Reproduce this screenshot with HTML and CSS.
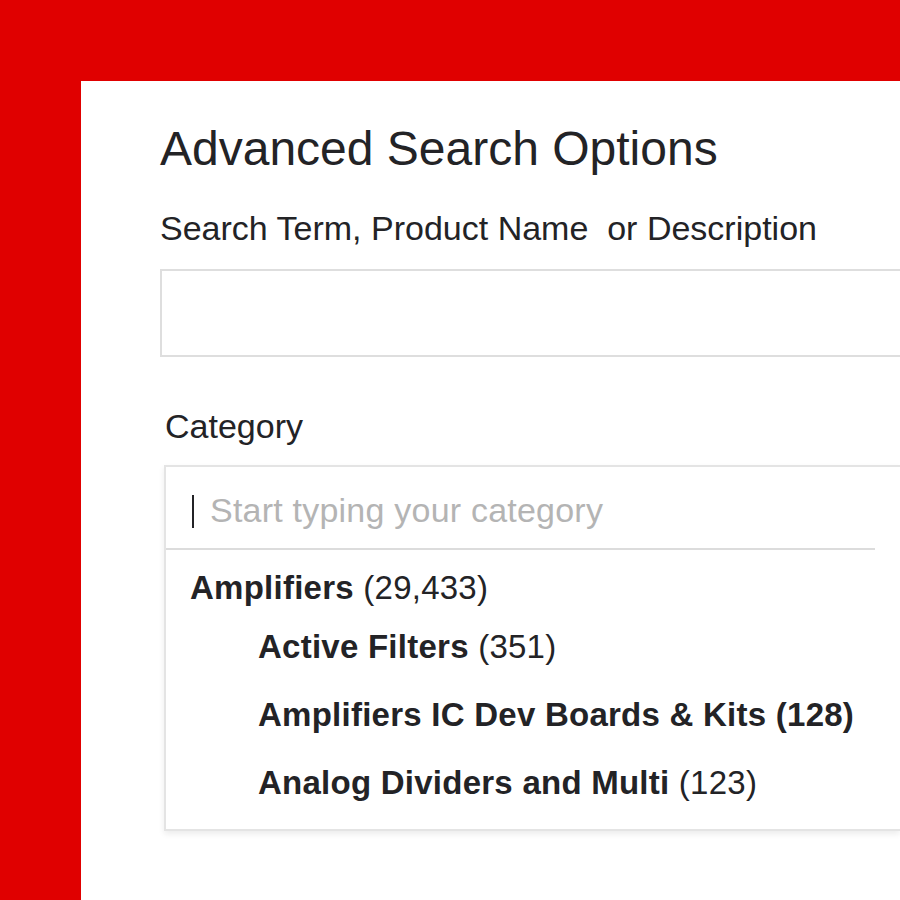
FILE: index.html
```html
<!DOCTYPE html>
<html>
<head>
<meta charset="utf-8">
<link rel="stylesheet" href="styles.css">
</head>
<body>
<div class="panel">
  <h1 class="title">Advanced Search Options</h1>
  <div class="label">Search Term, Product Name&nbsp; or Description</div>
  <div class="input"></div>
  <div class="label cat-label">Category</div>
  <div class="catbox">
    <div class="cat-search"><span class="caret"></span><span class="placeholder">Start typing your category</span></div>
    <div class="sep"></div>
    <ul class="list">
      <li class="item top"><b>Amplifiers</b> (29,433)</li>
      <li class="item sub first"><b>Active Filters</b> (351)</li>
      <li class="item sub"><b>Amplifiers IC Dev Boards &amp; Kits (128)</b></li>
      <li class="item sub"><b>Analog Dividers and Multi</b> (123)</li>
    </ul>
  </div>
</div>
</body>
</html>
```
FILE: styles.css
```css
html, body { margin: 0; padding: 0; }
body {
  background: #e00000;
  width: 900px;
  height: 900px;
  overflow: hidden;
  font-family: "Liberation Sans", Arial, sans-serif;
  color: #232326;
}
.panel {
  margin: 81px 0 0 81px;
  height: 819px;
  background: #fff;
  padding: 40px 0 0 79px;
  box-sizing: border-box;
  overflow: hidden;
}
.title {
  margin: 0;
  font-weight: normal;
  font-size: 48px;
  line-height: 56px;
}
.label {
  font-size: 34px;
  line-height: 40px;
  margin-top: 31px;
}
.input {
  margin-top: 21px;
  height: 84px;
  border: 2px solid #dedede;
  border-right: none;
}
.cat-label { margin-left: 5px; margin-top: 49px; }
.catbox {
  margin-top: 19px;
  margin-left: 4px;
  border: 2px solid #e4e4e4;
  border-right: none;
  box-shadow: 0 3px 6px rgba(0,0,0,0.08);
  height: 366px;
  box-sizing: border-box;
}
.cat-search {
  padding: 23px 0 18px 26px;
  font-size: 34px;
  line-height: 40px;
}
.caret {
  display: inline-block;
  width: 2px;
  height: 33px;
  background: #232326;
  margin-right: 16px;
  vertical-align: -6px;
}
.placeholder { color: #b4b4b4; letter-spacing: 0.22px; }
.sep {
  height: 2px;
  background: #dcdcdc;
  width: 709px;
}
.list { list-style: none; margin: 0; padding: 18px 0 0 24px; }
.item { font-size: 33px; line-height: 40px; letter-spacing: 0.25px; }
.item.sub { padding-left: 68px; margin-top: 28px; }
.item.sub.first { margin-top: 19px; }
```
